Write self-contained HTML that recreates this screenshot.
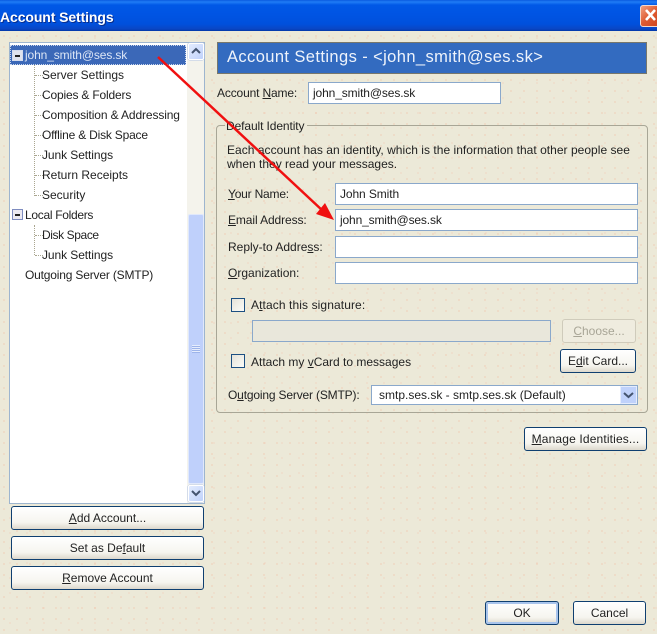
<!DOCTYPE html>
<html><head><meta charset="utf-8">
<style>
*{box-sizing:border-box}
html,body{margin:0;padding:0;background:#ece9d8}
body{width:657px;height:634px;overflow:hidden;position:relative}
#w{position:absolute;left:0;top:0;width:657px;height:634px;overflow:hidden;filter:blur(.35px);background-color:#ece9d8;
background-image:radial-gradient(circle at 1px 1px,rgba(245,170,140,.3) .7px,transparent 1.1px),radial-gradient(circle at 1px 1px,rgba(245,170,140,.2) .7px,transparent 1.1px);
background-size:13px 11px,17px 15px;background-position:3px 2px,9px 7px;
font-family:"Liberation Sans",sans-serif;font-size:12px;color:#222}
.a{position:absolute;white-space:nowrap;line-height:14px}
.title{left:0;top:0;width:657px;height:31px;background:linear-gradient(#0a5be0 0,#1f7cf5 2px,#0058e6 5px,#0054e3 14px,#0050dc 24px,#0a46c4 29px,#0038a8 31px)}
.tt{left:0;top:8px;color:#fff;font-weight:bold;font-size:14px;line-height:18px;text-shadow:1px 1px 0 #0a2e8c;letter-spacing:-.1px}
.close{left:640px;top:5px;width:24px;height:22px;background:linear-gradient(135deg,#f0a080,#df5a30 45%,#c8401c);border:1px solid #f3d8cc;border-radius:3px;color:#fff}
.tree{left:9px;top:42px;width:196px;height:462px;background:#fff;border:1px solid #9db5cf}
.sel{left:10px;top:45px;width:176px;height:20px;background:#3b68b8;border:1px dotted #c9d6ec}
.t{color:#222}
.box{width:11px;height:11px;border:1px solid #7e8cc0;background:#eceaf2}
.box:after{content:"";position:absolute;left:2px;top:4px;width:5px;height:2px;background:#222}
.dv{width:0;border-left:1px dotted #a9a58f}
.dh{height:0;width:8px;border-top:1px dotted #a9a58f}
.sb{left:187px;top:43px;width:17px;height:460px;background:#f4f3ec}
.sbtn{left:188px;width:16px;height:17px;background:linear-gradient(135deg,#e3ecfe,#c0d2fb);border:1px solid #fff;border-radius:2px;box-shadow:0 0 0 .5px #b5c5e6}
.thumb{left:188px;top:214px;width:16px;height:270px;background:#bfd0fb;border:1px solid #e0e8fb;border-radius:2px}
.btn{position:absolute;background:linear-gradient(#fff,#f6f5ef 70%,#dcd8cc);border:1px solid #0f3f70;border-radius:3px;text-align:center;line-height:23px;white-space:nowrap;color:#222}
.hdr{left:217px;top:42px;width:430px;height:32px;background:#336bc0;border:1px solid #77776c;color:#eef3fb;font-size:16.5px;line-height:29px;padding-left:9px;letter-spacing:.4px}
.in{position:absolute;background:#fff;border:1px solid #8aa8cb;line-height:20px;padding-left:4px;white-space:nowrap;color:#222}
.group{left:216px;top:125px;width:432px;height:288px;border:1px solid #a8a696;border-radius:4px}
.legend{left:225px;top:119px;background:#ece9d8;padding:0 3px 0 1px;letter-spacing:-.1px}
.cb{position:absolute;width:14px;height:14px;border:1px solid #1c4f82;background:linear-gradient(135deg,#e4e2d8,#fbfbf8)}
u{text-decoration:underline}
</style></head><body><div id="w">
<div class="a title"></div>
<div class="a tt">Account Settings</div>
<div class="a close"><svg width="22" height="20" style="position:absolute;left:0;top:0"><path d="M5 4L14 14M14 4L5 14" stroke="#fff" stroke-width="2.6"/></svg></div>

<div class="a tree"></div>
<div class="a sel"></div>
<div class="a box" style="left:12px;top:50px;border-color:#d4dcee;background:#dfe3ee"></div>
<div class="a" style="left:25px;top:48px;color:#dce6f6;letter-spacing:-.12px">john_smith@ses.sk</div>
<div class="a dv" style="left:34px;top:65px;height:131px"></div>
<div class="a dh" style="left:35px;top:75px"></div>
<div class="a dh" style="left:35px;top:95px"></div>
<div class="a dh" style="left:35px;top:115px"></div>
<div class="a dh" style="left:35px;top:135px"></div>
<div class="a dh" style="left:35px;top:155px"></div>
<div class="a dh" style="left:35px;top:175px"></div>
<div class="a dh" style="left:35px;top:195px"></div>
<div class="a t" style="left:42px;top:68px">Server Settings</div>
<div class="a t" style="left:42px;top:88px;letter-spacing:-.18px">Copies &amp; Folders</div>
<div class="a t" style="left:42px;top:108px;letter-spacing:-.12px">Composition &amp; Addressing</div>
<div class="a t" style="left:42px;top:128px;letter-spacing:-.2px">Offline &amp; Disk Space</div>
<div class="a t" style="left:42px;top:148px;letter-spacing:-.08px">Junk Settings</div>
<div class="a t" style="left:42px;top:168px">Return Receipts</div>
<div class="a t" style="left:42px;top:188px">Security</div>
<div class="a box" style="left:12px;top:209px"></div>
<div class="a t" style="left:25px;top:208px;letter-spacing:-.3px">Local Folders</div>
<div class="a dv" style="left:34px;top:225px;height:30px"></div>
<div class="a dh" style="left:35px;top:235px"></div>
<div class="a dh" style="left:35px;top:255px"></div>
<div class="a t" style="left:42px;top:228px;letter-spacing:-.4px">Disk Space</div>
<div class="a t" style="left:42px;top:248px;letter-spacing:-.08px">Junk Settings</div>
<div class="a t" style="left:25px;top:268px;letter-spacing:-.18px">Outgoing Server (SMTP)</div>

<div class="a sb"></div>
<div class="a sbtn" style="top:43px"><svg width="14" height="15" style="position:absolute;left:0;top:0"><path d="M3 9L7 5L11 9" fill="none" stroke="#44546f" stroke-width="2"/></svg></div>
<div class="a thumb"></div>
<div class="a" style="left:192px;top:345px;width:8px;height:8px;background:repeating-linear-gradient(#e6edfd 0 1px,#9db4ea 1px 2px)"></div>
<div class="a sbtn" style="top:485px"><svg width="14" height="15" style="position:absolute;left:0;top:0"><path d="M3 5L7 9L11 5" fill="none" stroke="#44546f" stroke-width="2"/></svg></div>

<div class="btn" style="left:11px;top:506px;width:193px;height:24px"><u>A</u>dd Account...</div>
<div class="btn" style="left:11px;top:536px;width:193px;height:24px">Set as De<u>f</u>ault</div>
<div class="btn" style="left:11px;top:566px;width:193px;height:24px"><u>R</u>emove Account</div>

<div class="a hdr">Account Settings - &lt;john_smith@ses.sk&gt;</div>
<div class="a" style="left:217px;top:86px;letter-spacing:-.15px">Account <u>N</u>ame:</div>
<div class="in" style="left:308px;top:82px;width:193px;height:22px;letter-spacing:-.12px">john_smith@ses.sk</div>

<div class="a group"></div>
<div class="a legend">Default Identity</div>
<div class="a" style="left:227px;top:143px;letter-spacing:.03px">Each account has an identity, which is the information that other people see</div>
<div class="a" style="left:227px;top:157px">when they read your messages.</div>

<div class="a" style="left:228px;top:187px;letter-spacing:-.2px"><u>Y</u>our Name:</div>
<div class="in" style="left:335px;top:183px;width:303px;height:22px;letter-spacing:-.1px">John Smith</div>
<div class="a" style="left:228px;top:213px;letter-spacing:-.1px"><u>E</u>mail Address:</div>
<div class="in" style="left:335px;top:209px;width:303px;height:22px;letter-spacing:-.15px">john_smith@ses.sk</div>
<div class="a" style="left:228px;top:240px"><span>Reply-to Addre<u>s</u>s:</span></div>
<div class="in" style="left:335px;top:236px;width:303px;height:22px"></div>
<div class="a" style="left:228px;top:266px"><u>O</u>rganization:</div>
<div class="in" style="left:335px;top:262px;width:303px;height:22px"></div>

<div class="cb" style="left:231px;top:298px"></div>
<div class="a" style="left:251px;top:298px;letter-spacing:.1px">A<u>t</u>tach this signature:</div>
<div class="a" style="left:252px;top:320px;width:299px;height:22px;background:#e9e7db;border:1px solid #8aa8cb"></div>
<div class="btn" style="left:562px;top:319px;width:74px;height:24px;border-color:#cfcbbb;color:#a8a596;background:#efecdf"><u>C</u>hoose...</div>
<div class="cb" style="left:231px;top:354px"></div>
<div class="a" style="left:251px;top:355px">Attach my <u>v</u>Card to messages</div>
<div class="btn" style="left:560px;top:349px;width:76px;height:24px">E<u>d</u>it Card...</div>

<div class="a" style="left:228px;top:388px;letter-spacing:-.17px">O<u>u</u>tgoing Server (SMTP):</div>
<div class="in" style="left:371px;top:385px;width:267px;height:20px;line-height:18px;padding-left:7px">smtp.ses.sk - smtp.ses.sk (Default)</div>
<div class="a" style="left:620px;top:386px;width:17px;height:18px;background:#c0d2fb;border:1px solid #e4ecfd"><svg width="15" height="16" style="position:absolute;left:0;top:0"><path d="M3 6L7.5 10L12 6" fill="none" stroke="#44546f" stroke-width="2"/></svg></div>

<div class="btn" style="left:524px;top:427px;width:123px;height:24px;letter-spacing:.15px"><u>M</u>anage Identities...</div>
<div class="btn" style="left:485px;top:601px;width:74px;height:24px;box-shadow:inset 0 0 0 2px #a8c4ec">OK</div>
<div class="btn" style="left:573px;top:601px;width:73px;height:24px">Cancel</div>

<svg class="a" style="left:0;top:0" width="657" height="634"><path d="M158 57L323 211" stroke="#f01010" stroke-width="2.5"/><path d="M334 220L316 214L325 203Z" fill="#f01010"/></svg>
</div></body></html>
